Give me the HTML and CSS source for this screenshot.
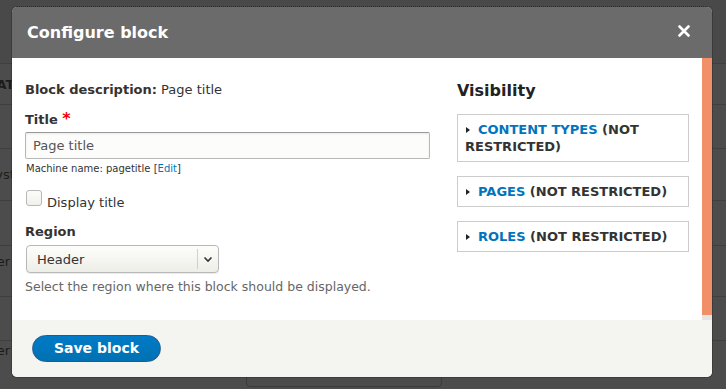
FILE: index.html
```html
<!DOCTYPE html>
<html lang="en">
<head>
<meta charset="utf-8">
<title>Configure block</title>
<link rel="stylesheet" href="styles.css">
</head>
<body>
<div class="page">
  <div class="bg-row bg-r0"></div>
  <div class="bg-row bg-r1"><span class="bg-text bg-bold">CAT</span></div>
  <div class="bg-row bg-r2"></div>
  <div class="bg-row bg-r3"><span class="bg-text">Syst</span></div>
  <div class="bg-row bg-r4"></div>
  <div class="bg-row bg-r5"><span class="bg-text">Her</span></div>
  <div class="bg-row bg-r6"></div>
  <div class="bg-row bg-r7"><span class="bg-text">Her</span><span class="bg-button"></span></div>

  <div class="dialog" role="dialog">
    <div class="titlebar">
      <span class="dtitle">Configure block</span>
      <span class="close" aria-label="Close">
        <svg width="12" height="12" viewBox="0 0 12 12"><path d="M1.5 1.5 L10.5 10.5 M10.5 1.5 L1.5 10.5" stroke="#fff" stroke-width="2.6" stroke-linecap="round" fill="none"/></svg>
      </span>
    </div>
    <div class="main">
      <div class="content">
        <div class="col-left">
          <div class="desc"><strong>Block description:</strong> Page title</div>
          <label class="label label-title">Title <span class="req">*</span></label>
          <div class="input">Page title</div>
          <div class="machine">Machine name: pagetitle [<a class="link">Edit</a>]</div>
          <div class="check-row"><span class="checkbox"></span><span class="check-label">Display title</span></div>
          <label class="label label-region">Region</label>
          <div class="select">
            <span class="select-text">Header</span>
            <span class="select-btn"><svg width="10" height="7" viewBox="0 0 10 7"><path d="M1.5 1.5 L5 5 L8.5 1.5" stroke="#333" stroke-width="1.6" fill="none"/></svg></span>
          </div>
          <div class="help">Select the region where this block should be displayed.</div>
        </div>
        <div class="col-right">
          <div class="vis-title">Visibility</div>
          <div class="details"><span class="tri"></span><span class="sum-link">Content types</span> (Not restricted)</div>
          <div class="details"><span class="tri"></span><span class="sum-link">Pages</span> (Not restricted)</div>
          <div class="details"><span class="tri"></span><span class="sum-link">Roles</span> (Not restricted)</div>
        </div>
      </div>
      <div class="scrollbar"><div class="thumb"></div></div>
    </div>
    <div class="footer">
      <span class="btn-primary">Save block</span>
    </div>
  </div>
</div>
</body>
</html>
```

FILE: styles.css
```css
* { box-sizing: border-box; }
html, body { margin: 0; padding: 0; }
body {
  font-family: "DejaVu Sans", "Liberation Sans", sans-serif;
  font-size: 13px;
  color: #333;
  background: #4c4c4c;
}
.page {
  position: relative;
  width: 726px;
  height: 389px;
  overflow: hidden;
  background: #4c4c4c;
}

/* background page behind the overlay */
.bg-row {
  border-top: 1px solid #3f3f3f;
  display: flex;
  align-items: center;
  position: relative;
}
.bg-r0 { height: 63px; border-top: 0; background: #494949; }
.bg-r1 { height: 41px; }
.bg-r2 { height: 44px; }
.bg-r3 { height: 52px; }
.bg-r4 { height: 45px; }
.bg-r5 { height: 51px; align-items: flex-start; padding-top: 8px; }
.bg-r6 { height: 44px; }
.bg-r7 { height: 49px; align-items: flex-start; padding-top: 2px; }
.bg-text {
  margin-left: -13px;
  color: #1c1c1c;
  font-size: 13px;
}
.bg-bold { font-weight: bold; }
.bg-button {
  position: absolute;
  left: 246px;
  top: 34px;
  width: 196px;
  height: 12px;
  border: 1px solid #3a3a3a;
  border-radius: 4px;
}

/* dialog */
.dialog {
  position: absolute;
  left: 12px;
  top: 7px;
  width: 700px;
  height: 370px;
  display: flex;
  flex-direction: column;
  border-radius: 5px;
  overflow: hidden;
  outline: 1px dotted #2e2e2e;
  background: #fff;
}
.titlebar {
  height: 51px;
  flex: none;
  background: #6b6b6b;
  display: flex;
  align-items: center;
  justify-content: space-between;
  padding: 0 22px 0 15px;
}
.dtitle {
  color: #fff;
  font-weight: bold;
  font-size: 16px;
  line-height: 20px;
  padding-top: 1px;
}
.close {
  display: flex;
  width: 12px;
  height: 12px;
  margin-bottom: 3px;
}
.main {
  height: 262px;
  flex: none;
  display: flex;
  background: #fff;
}
.content {
  flex: 1;
  display: flex;
  gap: 27px;
  padding: 22px 13px 0 13px;
}
.col-left { width: 405px; display: flex; flex-direction: column; }
.col-right { width: 232px; display: flex; flex-direction: column; }

.desc { line-height: 20px; }
.desc strong { font-weight: bold; }
.label {
  display: block;
  font-weight: bold;
  line-height: 20px;
}
.label-title { margin-top: 10px; }
.req { color: #e00; font-size: 16px; line-height: 16px; }
.input {
  margin-top: 2px;
  height: 27px;
  border: 1px solid #b8b8b8;
  border-top-color: #999;
  border-radius: 2px;
  background: #fcfcfa;
  padding: 0 7px;
  line-height: 25px;
  color: #555;
  box-shadow: inset 0 1px 2px rgba(0,0,0,0.08);
}
.machine {
  margin-top: 3px;
  margin-left: 1px;
  font-size: 10px;
  line-height: 14px;
  color: #333;
}
.link { color: #0074bd; text-decoration: none; }
.check-row {
  margin-top: 16px;
  height: 20px;
  display: flex;
  align-items: flex-start;
}
.checkbox {
  width: 16px;
  height: 16px;
  margin-top: -2px;
  margin-left: 1px;
  border: 1px solid #b8b8b8;
  border-radius: 3px;
  background: linear-gradient(#fcfcfa, #f0f0ec);
}
.check-label {
  margin-left: 5px;
  line-height: 22px;
}
.label-region { margin-top: 10px; }
.select {
  margin-top: 3px;
  margin-left: 1px;
  width: 193px;
  height: 28px;
  border: 1px solid #b8b8b8;
  border-radius: 4px;
  background: linear-gradient(#fdfdfb, #eeeee8);
  display: flex;
  align-items: center;
  box-shadow: 0 1px 1px rgba(0,0,0,0.08);
}
.select-text {
  flex: 1;
  padding-left: 10px;
  line-height: 20px;
  padding-top: 1px;
}
.select-btn {
  width: 21px;
  height: 20px;
  border-left: 1px solid #d0d0cc;
  display: flex;
  align-items: center;
  justify-content: center;
}
.help {
  margin-top: 4px;
  font-size: 12.5px;
  line-height: 20px;
  color: #666;
}

.vis-title {
  font-weight: bold;
  font-size: 16px;
  line-height: 20px;
  color: #222;
  padding-top: 1px;
}
.details {
  margin-top: 14px;
  border: 1px solid #ccc;
  padding: 6px 7px;
  line-height: 17px;
  font-weight: bold;
  text-transform: uppercase;
  color: #333;
}
.col-right .vis-title + .details { margin-top: 13px; }
.tri {
  display: inline-block;
  width: 0;
  height: 0;
  border-top: 3.5px solid transparent;
  border-bottom: 3.5px solid transparent;
  border-left: 4px solid #222;
  margin-right: 8px;
  margin-left: 1px;
  vertical-align: 1px;
}
.sum-link { color: #0074bd; }

.scrollbar {
  width: 10px;
  flex: none;
  background: #e5e5e5;
}
.thumb {
  height: 257px;
  background: #f08f68;
}

.footer {
  height: 57px;
  flex: none;
  background: #f4f4f0;
  padding: 15px 0 0 20px;
}
.btn-primary {
  display: inline-block;
  height: 27px;
  width: 129px;
  text-align: center;
  line-height: 25px;
  border: 1px solid #1e5c90;
  border-radius: 14px;
  background: linear-gradient(#007bc6, #0071b3);
  color: #fff;
  font-weight: bold;
  font-size: 14px;
}
```
